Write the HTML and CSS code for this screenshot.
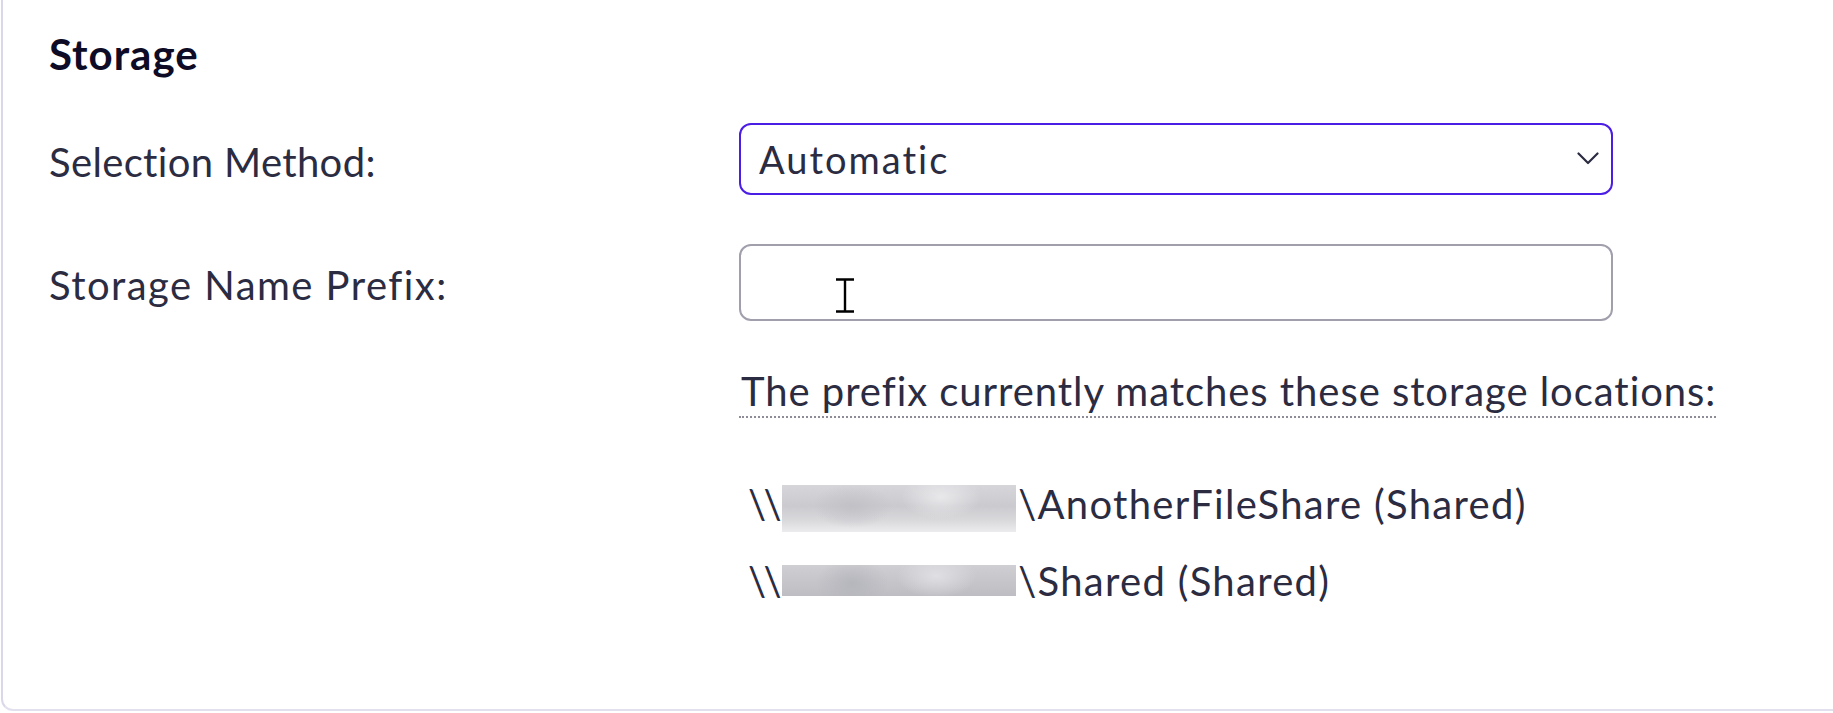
FILE: index.html
```html
<!DOCTYPE html>
<html lang="en">
<head>
<meta charset="utf-8">
<title>Storage</title>
<link rel="stylesheet" href="styles.css">
</head>
<body>
<section class="card">
  <h2 class="title">Storage</h2>
  <div class="form">
    <label class="label">Selection Method:</label>
    <div class="select">
      <span class="select-value">Automatic</span>
      <svg class="chevron" width="22" height="13" viewBox="0 0 22 13"><path d="M1.5 1.5 L11 11 L20.5 1.5" fill="none" stroke="#2b2c42" stroke-width="2.2" stroke-linecap="round" stroke-linejoin="round"/></svg>
    </div>

    <label class="label label-wide">Storage Name Prefix:</label>
    <div class="input-wrap">
      <div class="input"></div>
      <svg class="ibeam" width="20" height="35" viewBox="0 0 20 35"><path d="M1 1.5 H19 M10 1.5 V33.5 M1 33.5 H19" fill="none" stroke="#000" stroke-width="2.4"/></svg>
    </div>

    <div class="spacer"></div>
    <div class="matches">
      <span class="help">The prefix currently matches these storage locations:</span>
      <ul class="paths">
        <li><span class="bs">\\</span><span class="blur blur-a"></span>\AnotherFileShare (Shared)</li>
        <li><span class="bs">\\</span><span class="blur blur-b"></span>\Shared (Shared)</li>
      </ul>
    </div>
  </div>
</section>
</body>
</html>
```

FILE: styles.css
```css
html, body {
  margin: 0;
  padding: 0;
  background: #ffffff;
}

body {
  font-family: "Lato", "Liberation Sans", sans-serif;
  color: #2b2c42;
  overflow: hidden;
}

.card {
  margin-left: 1px;
  height: 711px;
  box-sizing: border-box;
  border-left: 2px solid #d9d7ea;
  border-bottom: 2px solid #e2e0ee;
  border-bottom-left-radius: 12px;
  padding: 29px 0 0 46px;
}

.title {
  margin: 0;
  font-size: 42px;
  line-height: 50px;
  font-weight: 700;
  color: #0d0b25;
  letter-spacing: 1px;
}

.form {
  margin-top: 44px;
  display: grid;
  grid-template-columns: 690px 874px;
  row-gap: 49px;
  align-items: center;
}

.label {
  font-size: 40px;
  line-height: 48px;
  padding-top: 5px;
  letter-spacing: 0.35px;
  white-space: nowrap;
}

.label-wide {
  letter-spacing: 1.45px;
}

.select {
  height: 72px;
  box-sizing: border-box;
  border: 2px solid #4b1ee6;
  border-radius: 12px;
  display: flex;
  align-items: center;
  justify-content: space-between;
  padding: 0 12px 0 18px;
}

.select-value {
  font-size: 38px;
  line-height: 68px;
  letter-spacing: 2px;
}

.chevron {
  margin-top: -2px;
}

.input-wrap {
  position: relative;
}

.input {
  height: 77px;
  box-sizing: border-box;
  border: 2px solid #a19fac;
  border-radius: 12px;
  background: #fff;
}

.ibeam {
  position: absolute;
  left: 96px;
  top: 34px;
}

.matches {
  margin-top: -3px;
  align-self: start;
  white-space: nowrap;
}

.help {
  display: inline-block;
  font-size: 40px;
  line-height: 48px;
  letter-spacing: 0.95px;
  padding: 0 0 1px 2px;
  border-bottom: 2px dotted #8d8c98;
}

.paths {
  list-style: none;
  margin: 48px 0 0 0;
  padding: 0 0 0 9px;
}

.paths li {
  font-size: 40px;
  line-height: 77px;
  height: 77px;
  letter-spacing: 1.3px;
  white-space: nowrap;
}

.bs {
  letter-spacing: -2.5px;
}

.blur {
  display: inline-block;
  width: 234px;
  margin: 0 2px 0 3px;
}

.blur-a {
  height: 47px;
  vertical-align: -13px;
  background:
    radial-gradient(ellipse 40px 22px at 30% 45%, rgba(190,190,196,0.8), rgba(190,190,196,0) 100%),
    radial-gradient(ellipse 40px 22px at 68% 25%, rgba(235,235,238,0.9), rgba(235,235,238,0) 100%),
    linear-gradient(180deg, #d6d6da 0%, #cbcbcf 45%, #d9d9dc 75%, #ececee 100%);
}

.blur-b {
  height: 31px;
  vertical-align: 0;
  background:
    radial-gradient(ellipse 36px 26px at 30% 60%, rgba(178,178,186,0.8), rgba(178,178,186,0) 100%),
    radial-gradient(ellipse 40px 22px at 66% 35%, rgba(226,226,230,0.9), rgba(226,226,230,0) 100%),
    linear-gradient(180deg, #cfcfd3 0%, #c4c4c9 60%, #bdbdc3 100%);
}
```
